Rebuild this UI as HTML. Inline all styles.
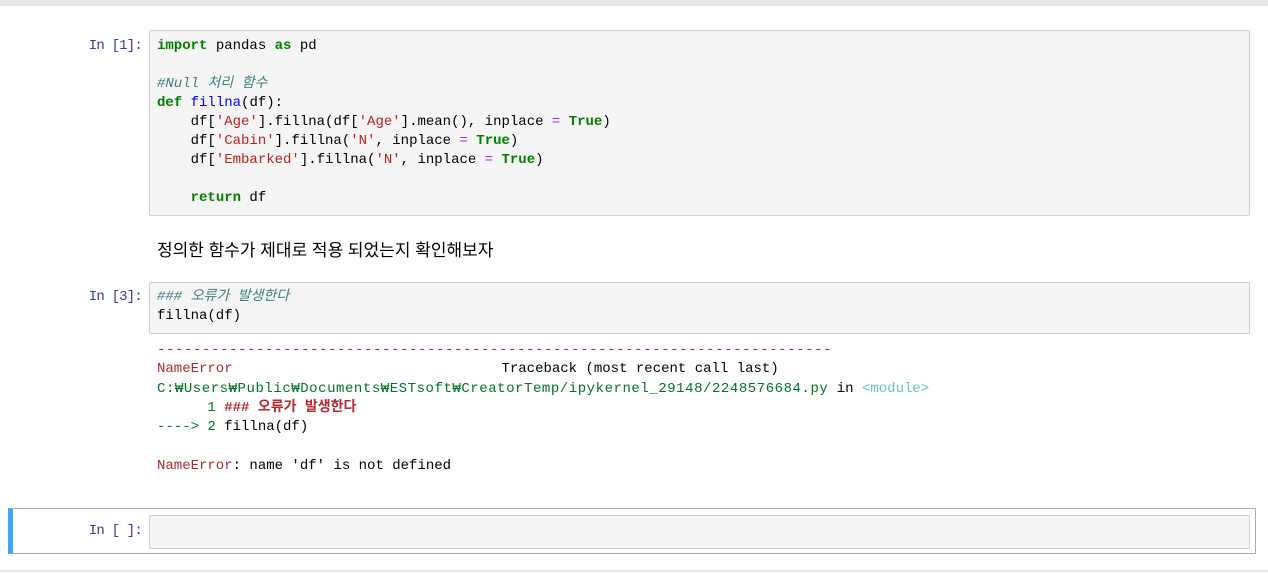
<!DOCTYPE html>
<html><head><meta charset="utf-8"><style>
body{margin:0;width:1268px;height:573px;background:#fff;position:relative;overflow:hidden;font-family:"Liberation Mono","Noto Sans CJK KR",monospace;font-size:14px}
.top{position:absolute;left:0;top:0;width:1268px;height:6px;background:#e6e6e6}
.bot{position:absolute;left:0;top:570px;width:1268px;height:2px;background:#e6e6e6}
.p{position:absolute;color:#303f9f;font-size:14px;line-height:19px;text-align:right;width:60px;letter-spacing:-0.8px}
.box{position:absolute;background:#f5f5f5;border:1px solid #cfcfcf;border-radius:2px;box-sizing:border-box}
pre{margin:0;font-family:"Liberation Mono","Noto Sans CJK KR",monospace;font-size:14px;line-height:19px;color:#000;position:absolute;white-space:pre}
.k{color:#008000;font-weight:bold}.f{color:#0000ff}.s{color:#ba2121}.o{color:#aa22ff}.c{color:#408080;font-style:italic}
.r{color:#b22b31}.g{color:#007427}.cy{color:#60c6c8}.rb{color:#b22b31;font-weight:bold}
.md{position:absolute;left:157px;top:236px;font-family:"Liberation Sans","Noto Sans CJK KR",sans-serif;font-size:17px;color:#000}
.sel{position:absolute;left:8px;top:508px;width:1248px;height:46px;border:1px solid #ababab;box-sizing:border-box;border-left:5px solid #42a5f5}
</style></head><body>
<div class="top"></div>
<div class="p" style="left:82px;top:37px">In [1]:</div>
<div class="box" style="left:149px;top:30px;width:1101px;height:186px"></div>
<pre style="left:157px;top:37px"><span class="k">import</span> pandas <span class="k">as</span> pd

<span class="c">#Null 처리 함수</span>
<span class="k">def</span> <span class="f">fillna</span>(df):
    df[<span class="s">'Age'</span>].fillna(df[<span class="s">'Age'</span>].mean(), inplace <span class="o">=</span> <span class="k">True</span>)
    df[<span class="s">'Cabin'</span>].fillna(<span class="s">'N'</span>, inplace <span class="o">=</span> <span class="k">True</span>)
    df[<span class="s">'Embarked'</span>].fillna(<span class="s">'N'</span>, inplace <span class="o">=</span> <span class="k">True</span>)

    <span class="k">return</span> df</pre>
<div class="md">정의한 함수가 제대로 적용 되었는지 확인해보자</div>
<div class="p" style="left:82px;top:288px">In [3]:</div>
<div class="box" style="left:149px;top:282px;width:1101px;height:52px"></div>
<pre style="left:157px;top:288px"><span class="c">### 오류가 발생한다</span>
fillna(df)</pre>
<pre style="left:157px;top:341px;line-height:19.25px"><span class="r" style="letter-spacing:0.6px">---------------------------------------------------------------------------</span>
<span class="r">NameError</span>                                Traceback (most recent call last)
<span class="g" style="letter-spacing:0.55px">C:₩Users₩Public₩Documents₩ESTsoft₩CreatorTemp/ipykernel_29148/2248576684.py</span> in <span class="cy">&lt;module&gt;</span>
<span class="g">      1</span> <span class="rb">### 오류가 발생한다</span>
<span class="g">----&gt; 2</span> fillna(df)

<span class="r">NameError</span>: name 'df' is not defined</pre>
<div class="sel"></div>
<div class="p" style="left:82px;top:522px">In [ ]:</div>
<div class="box" style="left:149px;top:515px;width:1101px;height:34px"></div>
<div class="bot"></div>
</body></html>
